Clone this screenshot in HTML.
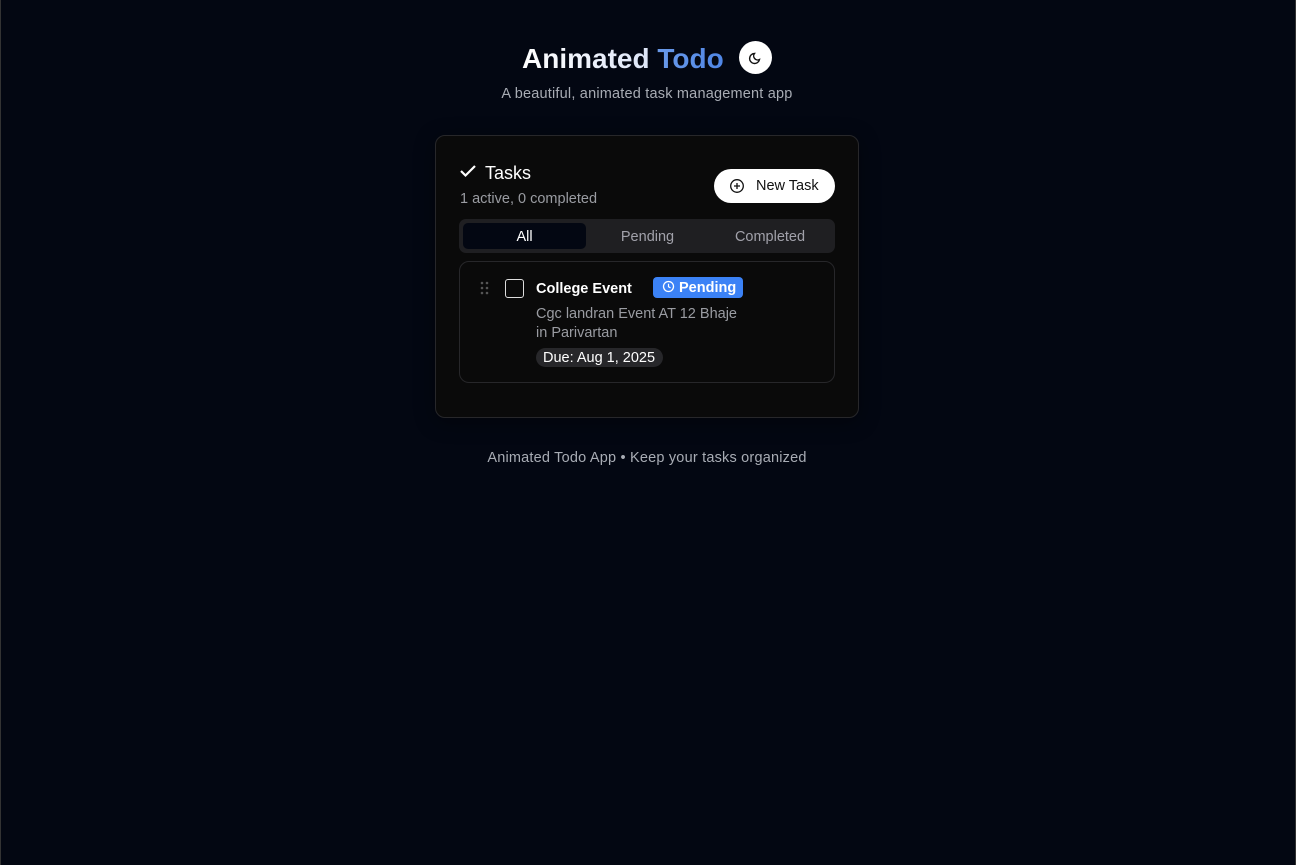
<!DOCTYPE html>
<html><head><meta charset="utf-8"><style>
*{margin:0;padding:0;box-sizing:border-box}
body{width:1296px;height:865px;background:#030712;font-family:"Liberation Sans",sans-serif;position:relative;overflow:hidden}
.a{position:absolute;white-space:nowrap}
</style></head><body>
<div class="a" style="left:0;top:0;width:1px;height:865px;background:#333"></div>
<div class="a" style="left:1295px;top:0;width:1px;height:865px;background:#333"></div>
<div class="a" style="left:522px;top:43px;font-size:28px;font-weight:bold;letter-spacing:0px"><span style="background:linear-gradient(90deg,#fff,#dde5f7);-webkit-background-clip:text;color:transparent">Animated</span> <span style="background:linear-gradient(90deg,#6a9ae9,#4f86e6);-webkit-background-clip:text;color:transparent">Todo</span></div>
<div class="a" style="left:739px;top:41px;width:33px;height:33px;border-radius:50%;background:#fff"><svg width="33" height="33" viewBox="0 0 33 33"><path d="M20.5 18.5a5 5 0 1 1-5-6 4 4 0 0 0 5 6z" fill="none" stroke="#111" stroke-width="1.4"/></svg></div>
<div class="a" style="left:0;width:1294px;text-align:center;top:86px;font-size:14.5px;letter-spacing:0.2px;color:#a8acb4">A beautiful, animated task management app</div>
<div class="a" style="left:435px;top:135px;width:424px;height:283px;background:#0a0a0a;border:1px solid #27272a;border-radius:10px;box-shadow:0 4px 20px rgba(0,0,0,.4)"></div>
<svg class="a" style="left:459px;top:163px" width="18" height="16" viewBox="0 0 18 16"><path d="M2 8l4.5 4.5L16 3" fill="none" stroke="#fff" stroke-width="2.2"/></svg>
<div class="a" style="left:485px;top:163px;font-size:18px;color:#fff">Tasks</div>
<div class="a" style="left:460px;top:191px;font-size:14.5px;color:#9a9ca2">1 active, 0 completed</div>
<div class="a" style="left:714px;top:169px;width:121px;height:34px;border-radius:17px;background:#fff"></div>
<svg class="a" style="left:729px;top:178px" width="16" height="16" viewBox="0 0 16 16"><circle cx="8" cy="8" r="6.3" fill="none" stroke="#111" stroke-width="1.3"/><path d="M8 5v6M5 8h6" stroke="#111" stroke-width="1.3"/></svg>
<div class="a" style="left:756px;top:178px;font-size:14.5px;color:#111">New Task</div>
<div class="a" style="left:459px;top:219px;width:376px;height:34px;border-radius:7px;background:#1f1f22"></div>
<div class="a" style="left:463px;top:223px;width:123px;height:26px;border-radius:5px;background:#030712"></div>
<div class="a" style="left:463px;top:229px;width:123px;text-align:center;font-size:14.5px;color:#fff">All</div>
<div class="a" style="left:586px;top:229px;width:123px;text-align:center;font-size:14.5px;color:#a1a1aa">Pending</div>
<div class="a" style="left:709px;top:229px;width:122px;text-align:center;font-size:14.5px;color:#a1a1aa">Completed</div>
<div class="a" style="left:459px;top:261px;width:376px;height:122px;border:1px solid #27272a;border-radius:10px;background:#0a0a0a"></div>
<svg class="a" style="left:480px;top:281px" width="10" height="14"><g fill="#555"><circle cx="2" cy="2" r="1.3"/><circle cx="7" cy="2" r="1.3"/><circle cx="2" cy="7" r="1.3"/><circle cx="7" cy="7" r="1.3"/><circle cx="2" cy="12" r="1.3"/><circle cx="7" cy="12" r="1.3"/></g></svg>
<div class="a" style="left:505px;top:279px;width:19px;height:19px;border:1.5px solid #ddd;border-radius:3px"></div>
<div class="a" style="left:536px;top:281px;font-size:14.5px;font-weight:bold;color:#fff">College Event</div>
<div class="a" style="left:653px;top:277px;width:90px;height:21px;border-radius:4px;background:#3b82f6"></div>
<svg class="a" style="left:662px;top:280px" width="13" height="13" viewBox="0 0 13 13"><circle cx="6.5" cy="6.5" r="5" fill="none" stroke="#fff" stroke-width="1.3"/><path d="M6.5 3.8v3l2 1" fill="none" stroke="#fff" stroke-width="1.2"/></svg>
<div class="a" style="left:679px;top:280px;font-size:14.5px;font-weight:bold;color:#fff">Pending</div>
<div class="a" style="left:536px;top:305px;font-size:14.5px;color:#9a9ca2;line-height:19px">Cgc landran Event AT 12 Bhaje<br>in Parivartan</div>
<div class="a" style="left:536px;top:348px;width:127px;height:19px;border-radius:10px;background:#27272a"></div>
<div class="a" style="left:543px;top:350px;font-size:14.5px;color:#fff">Due: Aug 1, 2025</div>
<div class="a" style="left:0;width:1294px;text-align:center;top:450px;font-size:14.5px;letter-spacing:0.2px;color:#a8acb4">Animated Todo App • Keep your tasks organized</div>
</body></html>
